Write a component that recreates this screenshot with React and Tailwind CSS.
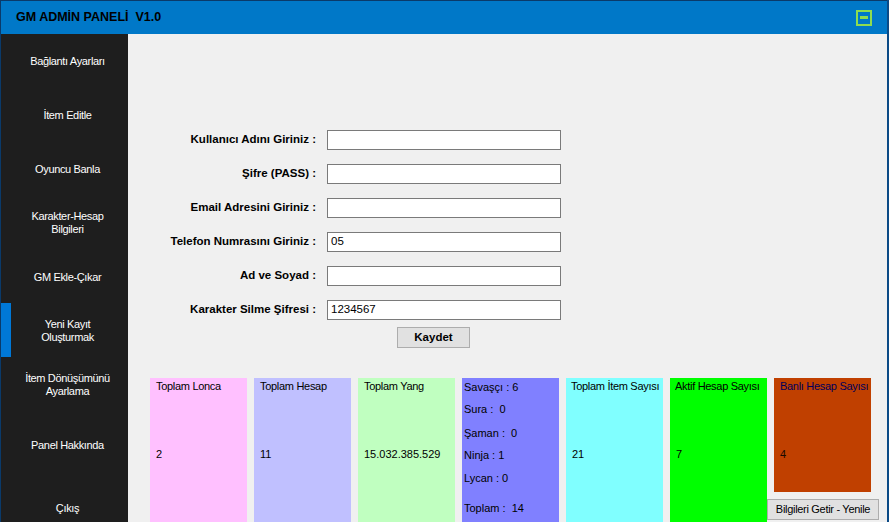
import React from "react";

const font = { fontFamily: '"Liberation Sans", Arial, sans-serif' };

const navItems = [
  { label: ["Bağlantı Ayarları"], h: "h-[54px]" },
  { label: ["İtem Editle"], h: "h-[54px]" },
  { label: ["Oyuncu Banla"], h: "h-[54px]" },
  { label: ["Karakter-Hesap", "Bilgileri"], h: "h-[54px]" },
  { label: ["GM Ekle-Çıkar"], h: "h-[54px]" },
  { label: ["Yeni Kayıt", "Oluşturmak"], h: "h-[54px]", active: true },
  { label: ["İtem Dönüşümünü", "Ayarlama"], h: "h-[54px]" },
  { label: ["Panel Hakkında"], h: "h-[66px]" },
  { label: ["Çıkış"], h: "h-[60px]" },
];

const fields = [
  { label: "Kullanıcı Adını Giriniz :", value: "" },
  { label: "Şifre (PASS) :", value: "" },
  { label: "Email Adresini Giriniz :", value: "" },
  { label: "Telefon Numrasını Giriniz :", value: "05" },
  { label: "Ad ve Soyad :", value: "" },
  { label: "Karakter Silme Şifresi :", value: "1234567" },
];

function StatCard({ title, value, bg, titlePl = "pl-[6px]" }) {
  return (
    <div className={`w-[97px] h-[150px] shrink-0 ${bg} flex flex-col`}>
      <div className={`${titlePl} pt-[1px] leading-[14px] whitespace-nowrap tracking-[-0.3px]`}>{title}</div>
      <div className="pl-[6px] mt-[54px] leading-[14px]">{value}</div>
    </div>
  );
}

export default function App() {
  return (
    <div
      className="w-[889px] h-[522px] overflow-hidden bg-[#0b4a86] flex text-[11px] text-black"
      style={font}
    >
      <div className="w-[887px] h-[522px] flex flex-col border-l border-[#0a3a6a] border-t border-t-[#0a3a6a]">
        {/* Title bar */}
        <div className="h-[33px] bg-[#0078c8] flex items-center justify-between pl-[15px] pr-[15px] shrink-0">
          <div className="font-bold text-[12.5px]">GM ADMİN PANELİ&nbsp; V1.0</div>
          <div className="w-[16px] h-[16px] border-2 border-[#8edc4f] flex items-center justify-center">
            <div className="w-[8px] h-[3px] bg-[#8edc4f]" />
          </div>
        </div>
        <div className="flex flex-1 min-h-0 overflow-hidden">
          {/* Sidebar */}
          <div className="w-[127px] bg-[#1e1e1e] flex flex-col shrink-0 overflow-hidden">
            {navItems.map((it, i) => (
              <div key={i} className={`${it.h} shrink-0 relative flex items-center justify-center text-white text-center leading-[13px] tracking-[-0.35px]`}>
                {it.active && <div className="absolute left-0 top-[-1px] w-[10px] h-[54px] bg-[#0078d7]" />}
                <div className="pl-[6px]">
                  {it.label.map((l, j) => (
                    <div key={j}>{l}</div>
                  ))}
                </div>
              </div>
            ))}
          </div>
          {/* Main */}
          <div className="flex-1 bg-[#f0f0f0] flex flex-col pt-[96px]">
            <div className="flex flex-col gap-[14px]">
              {fields.map((f, i) => (
                <div key={i} className="flex items-center h-[20px]">
                  <div className="w-[189px] text-right font-bold text-[11.5px] pr-[1px]">{f.label}</div>
                  <div className="ml-[10px] w-[234px] h-[20px] bg-white border border-[#7a7a7a] flex items-center pl-[3px] text-[11.5px]">
                    {f.value}
                  </div>
                </div>
              ))}
            </div>
            <div className="pl-[269px] mt-[7px]">
              <div className="w-[73px] h-[21px] bg-[#e1e1e1] border border-[#adadad] flex items-center justify-center font-bold text-[11.5px]">
                Kaydet
              </div>
            </div>
            <div className="flex pl-[22px] mt-[30px] gap-[7px]">
              <StatCard title="Toplam Lonca" value="2" bg="bg-[#ffc0ff]" />
              <StatCard title="Toplam Hesap" value="11" bg="bg-[#c0c0ff]" />
              <StatCard title="Toplam Yang" value="15.032.385.529" bg="bg-[#c0ffc0]" />
              <div className="w-[97px] h-[150px] shrink-0 bg-[#8080ff] flex flex-col pl-[2px] leading-[14px]">
                <div className="mt-[2px]">Savaşçı : 6</div>
                <div className="mt-[8px]">Sura :&nbsp; 0</div>
                <div className="mt-[10px]">Şaman :&nbsp; 0</div>
                <div className="mt-[8px]">Ninja : 1</div>
                <div className="mt-[9px]">Lycan : 0</div>
                <div className="mt-[16px]">Toplam :&nbsp; 14</div>
              </div>
              <StatCard title="Toplam İtem Sayısı" value="21" bg="bg-[#80ffff]" titlePl="pl-[5px]" />
              <StatCard title="Aktif Hesap Sayısı" value="7" bg="bg-[#00ff00]" titlePl="pl-[5px]" />
              <div className="w-[97px] shrink-0 flex flex-col">
                <div className="h-[114px] bg-[#c04000] flex flex-col">
                  <div className="pl-[6px] pt-[1px] leading-[14px] whitespace-nowrap tracking-[-0.3px] text-[#00005a]">Banlı Hesap Sayısı</div>
                  <div className="pl-[6px] mt-[54px] leading-[14px] text-[#1a0a00]">4</div>
                </div>
                <div className="mt-[7px] -ml-[7px] w-[112px] h-[21px] bg-[#e1e1e1] border border-[#adadad] flex items-center justify-center whitespace-nowrap tracking-[-0.3px]">
                  Bilgileri Getir - Yenile
                </div>
              </div>
            </div>
          </div>
        </div>
      </div>
    </div>
  );
}
